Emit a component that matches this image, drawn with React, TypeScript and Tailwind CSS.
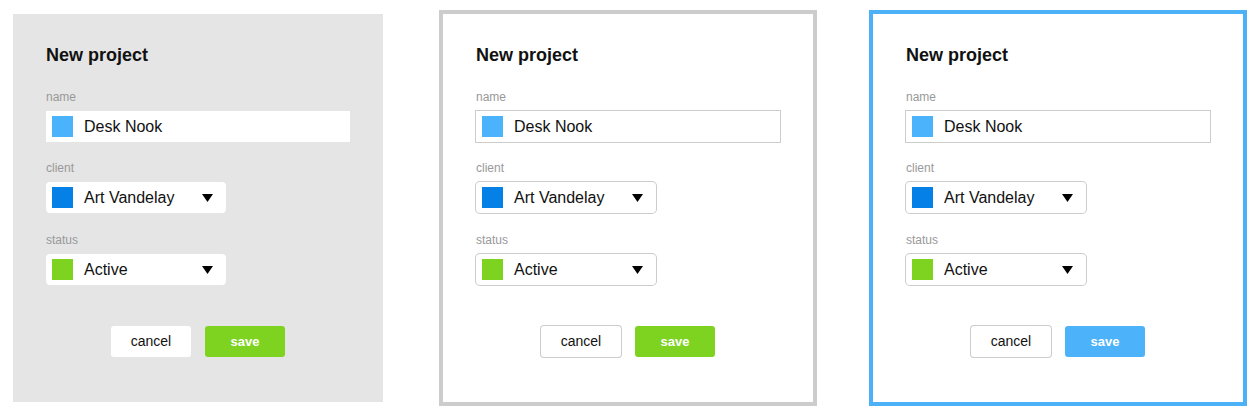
type Variant = 'flat' | 'outlined' | 'focused';

const SAVE_BG: Record<Variant, string> = {
  flat: 'bg-[#7ed321]',
  outlined: 'bg-[#7ed321]',
  focused: 'bg-[#4cb2fa]',
};

const PANEL: Record<Variant, string> = {
  flat: 'bg-[#e5e5e5]',
  outlined: 'bg-white outline-4 outline-[#cccccc]',
  focused: 'bg-white outline-4 outline-[#4cb1f7]',
};

function Caret() {
  return (
    <svg width="11" height="8" viewBox="0 0 11 8" className="ml-auto mr-[13px] shrink-0">
      <polygon points="0,0 11,0 5.5,8" fill="#000" />
    </svg>
  );
}

function Field({
  label,
  value,
  swatch,
  select,
  bordered,
  spacing,
}: {
  label: string;
  value: string;
  swatch: string;
  select?: boolean;
  bordered: boolean;
  spacing: string;
}) {
  return (
    <div className={spacing}>
      <div className="text-[12px] leading-[14px] text-[#999999]">{label}</div>
      <div
        className={`mt-[7px] h-[31px] flex items-center bg-white pl-[6px] ${
          select ? 'w-[180px] rounded-[4px]' : 'w-[304px]'
        } ${bordered ? 'ring-1 ring-[#cccccc]' : ''}`}
      >
        <span className={`w-[21px] h-[21px] shrink-0 ${swatch}`} />
        <span className="ml-[11px] text-[16px] text-[#111111]">{value}</span>
        {select && <Caret />}
      </div>
    </div>
  );
}

function ProjectDialog({ variant }: { variant: Variant }) {
  const bordered = variant !== 'flat';
  return (
    <div className={`w-[370px] h-[388px] shrink-0 pt-[30px] px-[33px] ${PANEL[variant]}`}>
      <h2 className="text-[18px] leading-[22px] font-bold text-[#111111] mb-[24px]">New project</h2>

      <Field label="name" value="Desk Nook" swatch="bg-[#4ab3fc]" bordered={bordered} spacing="" />
      <Field label="client" value="Art Vandelay" swatch="bg-[#0580e6]" bordered={bordered} select spacing="mt-[19px]" />
      <Field label="status" value="Active" swatch="bg-[#7ed321]" bordered={bordered} select spacing="mt-[20px]" />

      <div className="mt-[41px] flex justify-center gap-[14px]">
        <button
          className={`w-[80px] h-[31px] rounded-[3px] bg-white text-[14px] text-[#111111] ${
            bordered ? 'ring-1 ring-[#cccccc]' : ''
          }`}
        >
          cancel
        </button>
        <button className={`w-[80px] h-[31px] rounded-[3px] text-[13px] font-bold text-white ${SAVE_BG[variant]}`}>
          save
        </button>
      </div>
    </div>
  );
}

export default function App() {
  return (
    <div
      className="w-[1257px] h-[416px] bg-white flex gap-[60px] pl-[13px] pt-[14px]"
      style={{ fontFamily: '"Liberation Sans", Arial, sans-serif' }}
    >
      <ProjectDialog variant="flat" />
      <ProjectDialog variant="outlined" />
      <ProjectDialog variant="focused" />
    </div>
  );
}
